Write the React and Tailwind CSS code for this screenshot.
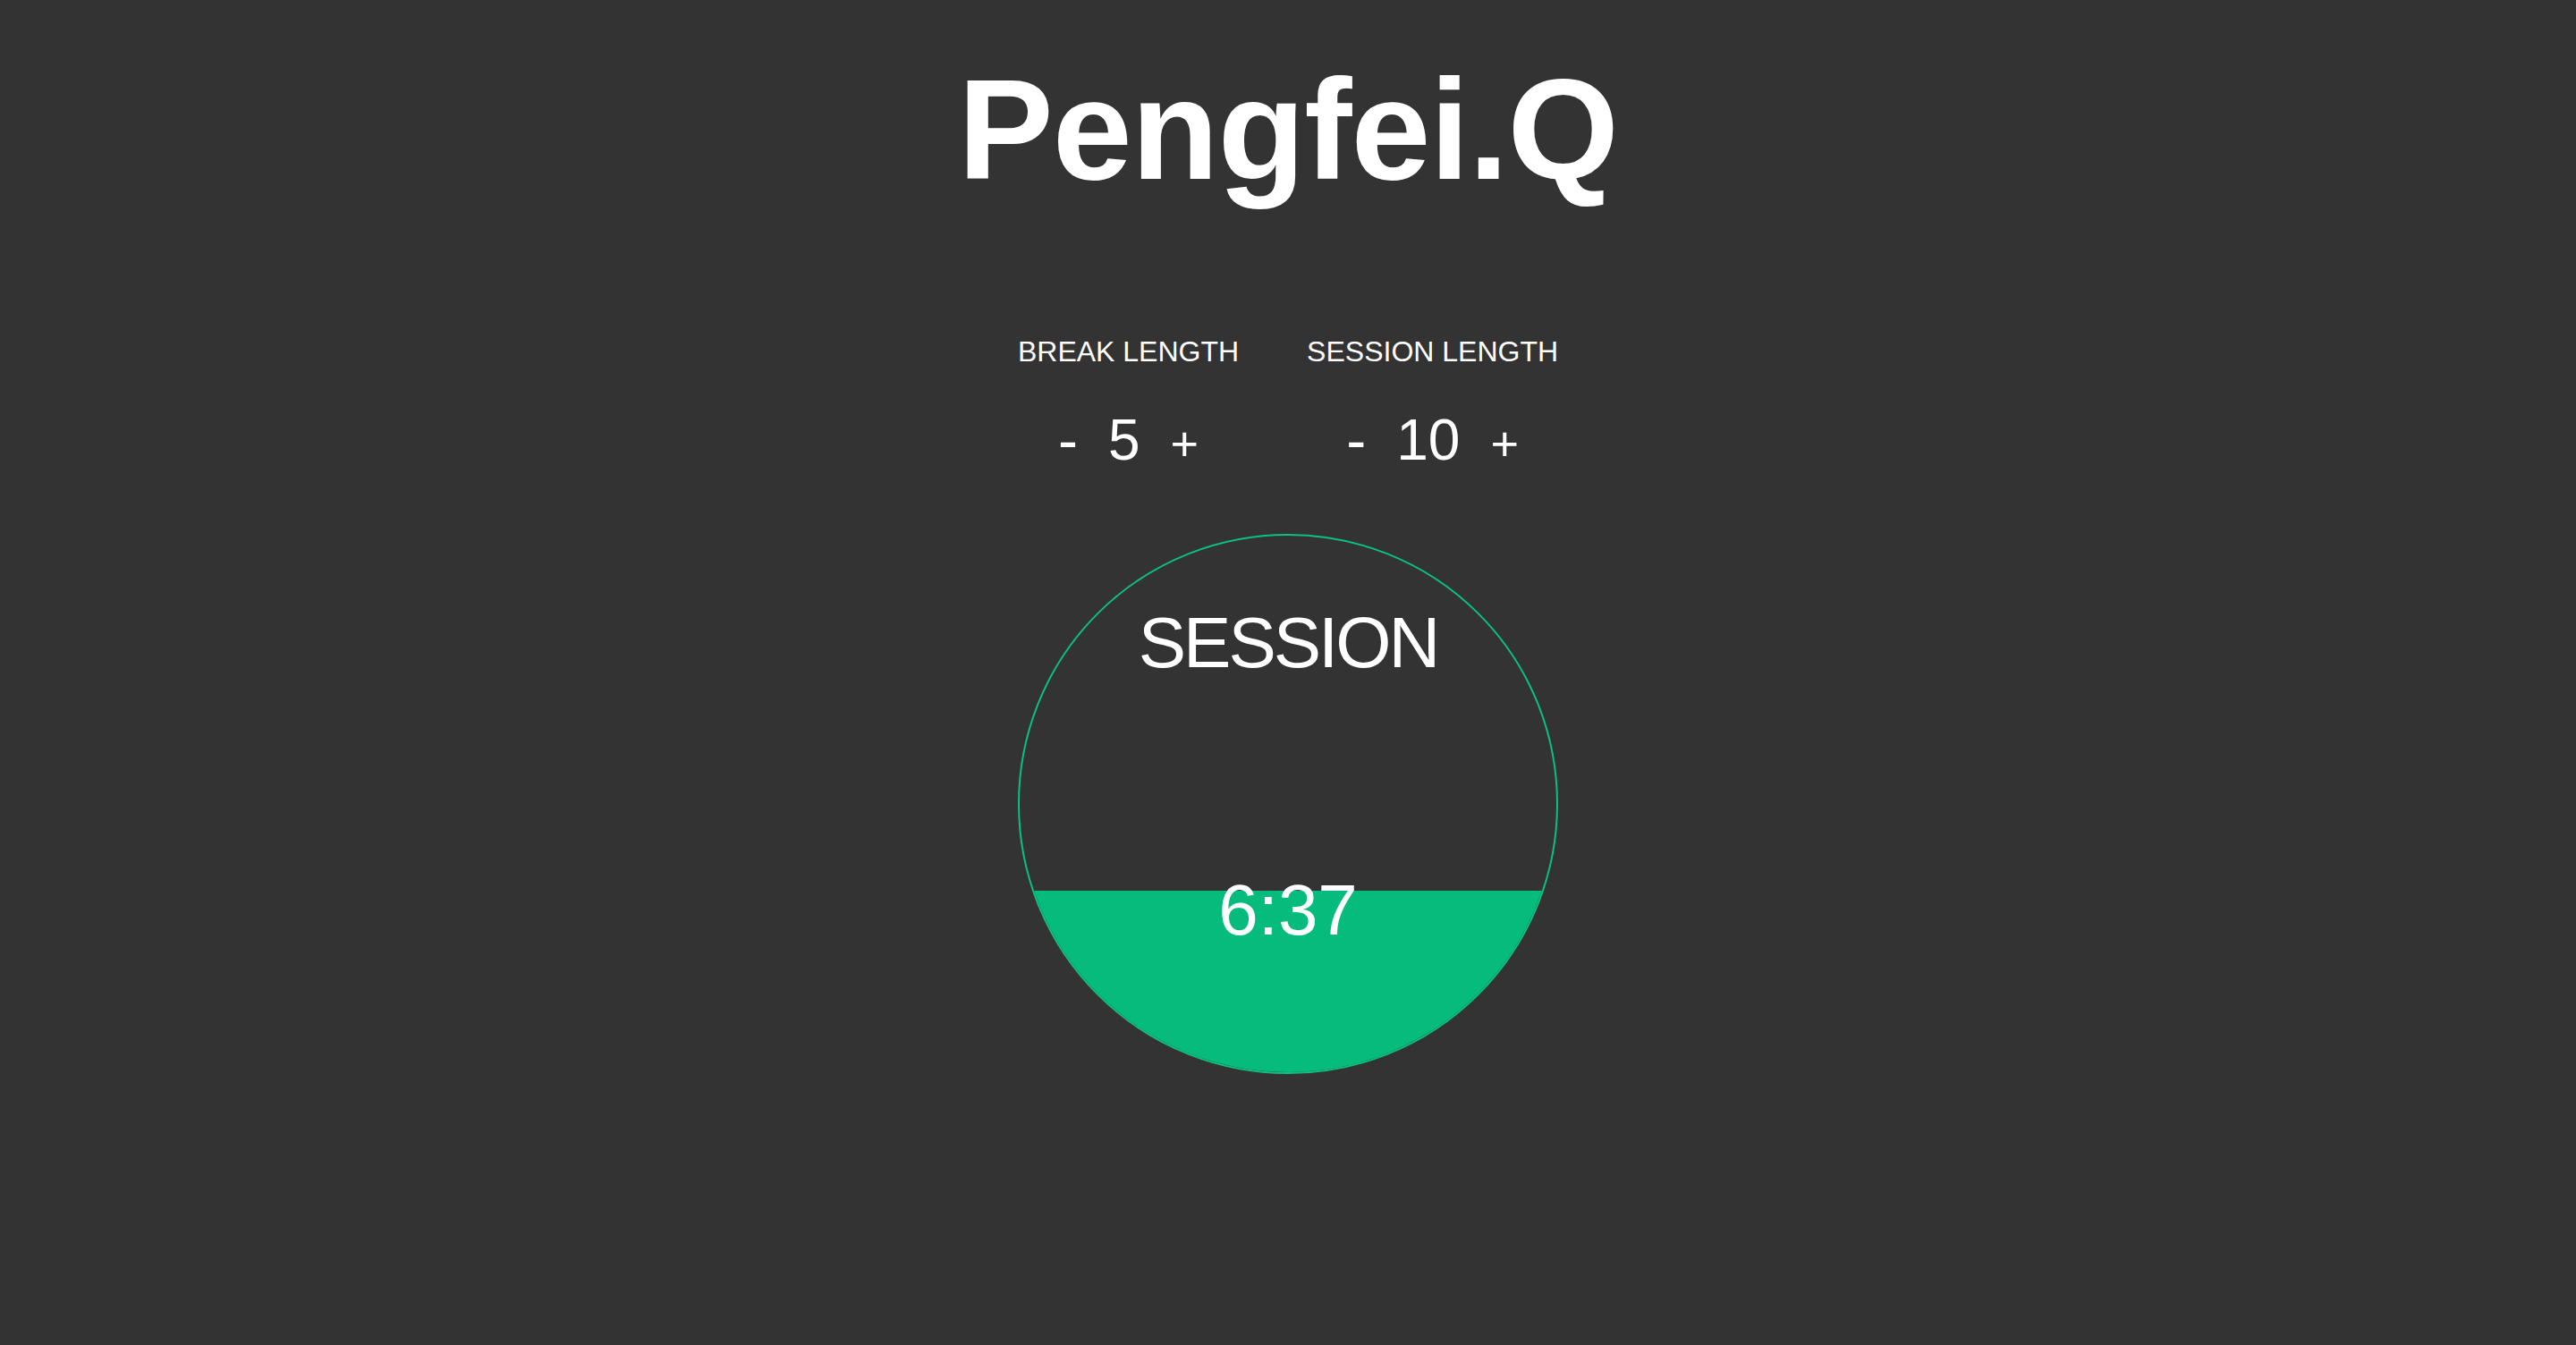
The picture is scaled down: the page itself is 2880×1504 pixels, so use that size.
import React from "react";

const BREAK = 5;
const SESSION = 10;
const REMAINING = 6 * 60 + 37;

function Counter({ label, value }) {
  return (
    <div className="flex flex-col items-center">
      <span className="text-[32px] leading-none">{label}</span>
      <div className="mt-[50px] flex items-center gap-[34px] leading-none">
        <button className="text-[66px] leading-none text-white">-</button>
        <span className="text-[64px] leading-none">{value}</span>
        <button className="text-[54px] leading-none text-white translate-y-[4px]">+</button>
      </div>
    </div>
  );
}

export default function App() {
  const total = SESSION * 60;
  const elapsed = (total - REMAINING) / total;
  const mins = Math.floor(REMAINING / 60);
  const secs = String(REMAINING % 60).padStart(2, "0");

  return (
    <div className="min-h-screen w-full bg-[#333333] text-white font-['Liberation_Sans',Arial,sans-serif] flex flex-col items-center pt-[65px]">
      <h1 className="text-[160px] font-bold leading-none tracking-[-1px]">Pengfei.Q</h1>

      <div className="mt-[152px] flex items-start gap-[76px]">
        <Counter label="BREAK LENGTH" value={BREAK} />
        <Counter label="SESSION LENGTH" value={SESSION} />
      </div>

      <div className="relative mt-[72px] w-[604px] h-[604px] rounded-full border-2 border-[#0cc080] overflow-hidden flex flex-col items-center">
        <div
          className="absolute bottom-0 left-0 right-0 bg-[#06bc7c]"
          style={{ height: `${elapsed * 100}%` }}
        />
        <span className="relative pt-[80px] text-[80px] leading-none tracking-[-3px]">SESSION</span>
        <span className="relative mt-[219px] text-[80px] leading-none">
          {mins}:{secs}
        </span>
      </div>
    </div>
  );
}
